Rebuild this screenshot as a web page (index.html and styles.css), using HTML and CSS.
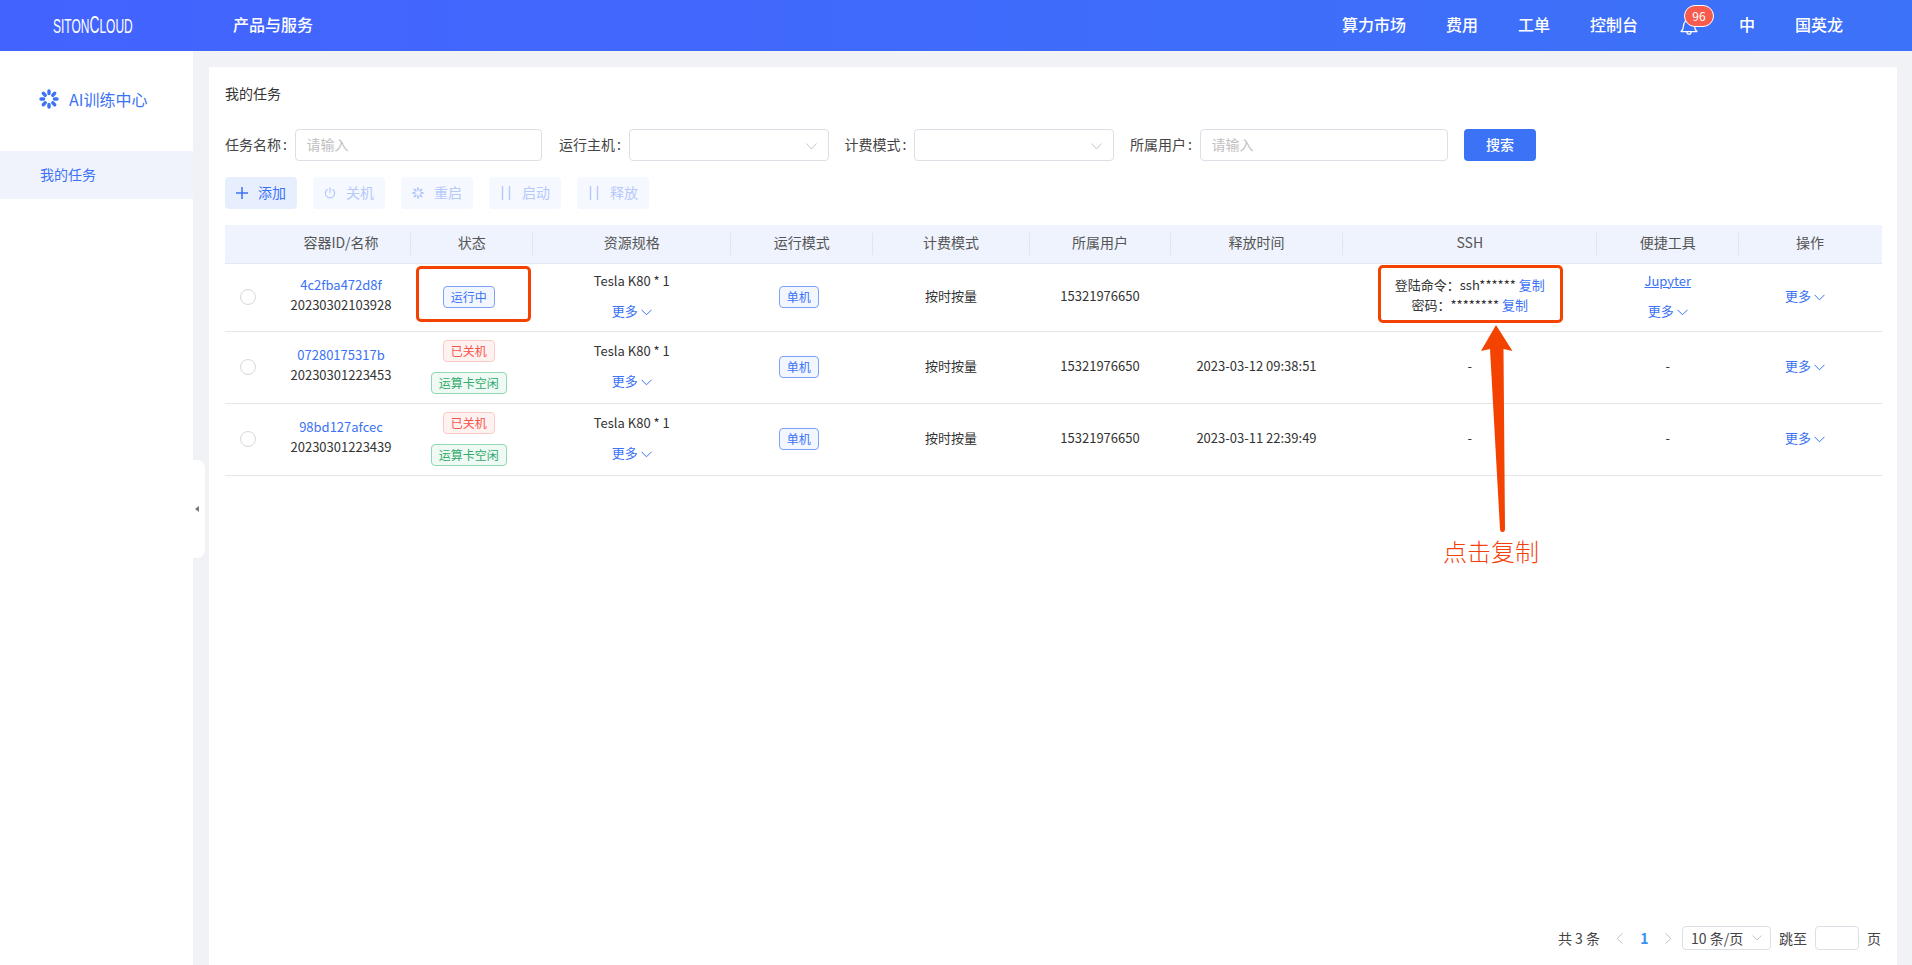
FILE: index.html
```html
<!DOCTYPE html>
<html lang="zh-CN">
<head>
<meta charset="utf-8">
<title>我的任务</title>
<link rel="stylesheet" href="styles.css">
</head>
<body>
<div class="app">
  <header class="topbar">
    <div class="logo"><span class="logo-text">SITON<span class="logo-c">C</span>LOUD</span></div>
    <div class="products">产品与服务</div>
    <nav class="topnav">
      <a>算力市场</a>
      <a>费用</a>
      <a>工单</a>
      <a>控制台</a>
      <span class="bell">
        <svg width="18" height="16" viewBox="0 0 18 16" fill="none" stroke="#fff" stroke-width="1.2" stroke-linejoin="round"><path d="M1 12.6c1.6-1.2 2.2-2.6 2.4-5C3.700 3.400 5.800 1 9 1s5.300 2.400 5.600 6.600c.2 2.400.8 3.800 2.400 5z"/><path d="M6.800 12.800c.2 1.500 1.100 2.400 2.200 2.400s2-.9 2.200-2.400"/></svg>
        <span class="badge">96</span>
      </span>
      <a>中</a>
      <a>国英龙</a>
    </nav>
  </header>
  <div class="body-row">
    <aside class="sidebar">
      <div class="side-title">
        <svg class="burst" width="20" height="20" viewBox="0 0 20 20" fill="none" stroke="#3b72f6" stroke-width="3.400" stroke-linecap="round"><path d="M10 2v2.600M10 15.400V18M2 10h2.600M15.400 10H18M4.300 4.300l1.900 1.900M13.800 13.800l1.900 1.900M4.300 15.700l1.900-1.900M13.800 6.200l1.900-1.900"/></svg>
        <span>AI训练中心</span>
      </div>
      <div class="side-item">我的任务</div>
      <div class="collapse"><i class="tri"></i></div>
    </aside>
    <main class="card">
      <div class="page-title">我的任务</div>
      <form class="search">
        <label class="lbl">任务名称<span class="colon">:</span></label>
        <input class="ctl w-wide" placeholder="请输入">
        <label class="lbl">运行主机<span class="colon">:</span></label>
        <div class="ctl sel w-sel"><svg width="11" height="7" viewBox="0 0 11 7" fill="none" stroke="#c4c7cd"><path d="M.5.5l5 5.500 5-5.500"/></svg></div>
        <label class="lbl">计费模式<span class="colon">:</span></label>
        <div class="ctl sel w-sel"><svg width="11" height="7" viewBox="0 0 11 7" fill="none" stroke="#c4c7cd"><path d="M.5.5l5 5.500 5-5.500"/></svg></div>
        <label class="lbl">所属用户<span class="colon">:</span></label>
        <input class="ctl w-wide2" placeholder="请输入">
        <button type="button" class="btn-search"><span>搜索</span></button>
      </form>
      <div class="actions">
        <button type="button" class="act act-on">
          <svg width="12" height="12" viewBox="0 0 12 12" stroke="#3b72f6" stroke-width="1.500"><path d="M0 6h12M6 0v12"/></svg><span>添加</span>
        </button>
        <button type="button" class="act">
          <svg width="12" height="12" viewBox="0 0 12 12" fill="none" stroke="#b5c9fb" stroke-width="1.200" stroke-linecap="round"><path d="M3.300 2.600a4.600 4.600 0 1 0 5.400 0M6 .8v4.600"/></svg><span>关机</span>
        </button>
        <button type="button" class="act">
          <svg width="12" height="12" viewBox="0 0 20 20" fill="none" stroke="#b5c9fb" stroke-width="3.400" stroke-linecap="round"><path d="M10 2v2.600M10 15.400V18M2 10h2.600M15.400 10H18M4.300 4.300l1.900 1.900M13.800 13.800l1.900 1.900M4.300 15.700l1.900-1.900M13.800 6.200l1.900-1.900"/></svg><span>重启</span>
        </button>
        <button type="button" class="act">
          <svg width="12" height="14" viewBox="0 0 12 14" stroke="#b5c9fb" stroke-width="1.400"><path d="M2.500 0v14M9.500 0v14"/></svg><span>启动</span>
        </button>
        <button type="button" class="act">
          <svg width="12" height="14" viewBox="0 0 12 14" stroke="#b5c9fb" stroke-width="1.400"><path d="M2.500 0v14M9.500 0v14"/></svg><span>释放</span>
        </button>
      </div>
      <table class="grid">
        <colgroup>
          <col class="c1"><col class="c2"><col class="c3"><col class="c4"><col class="c5"><col class="c6"><col class="c7"><col class="c8"><col class="c9"><col class="c10"><col class="c11">
        </colgroup>
        <thead>
          <tr>
            <th class="nosep"></th><th>容器ID/名称</th><th>状态</th><th>资源规格</th><th>运行模式</th><th>计费模式</th><th>所属用户</th><th>释放时间</th><th>SSH</th><th>便捷工具</th><th class="nosep">操作</th>
          </tr>
        </thead>
        <tbody>
          <tr class="r1">
            <td><span class="radio"></span></td>
            <td><div class="stack"><a class="lnk">4c2fba472d8f</a><span>20230302103928</span></div></td>
            <td><span class="tag t-blue">运行中</span></td>
            <td><div class="stack s10"><span>Tesla K80 * 1</span><a class="lnk more">更多<svg width="11" height="7" viewBox="0 0 11 7" fill="none" stroke="#3b72f6"><path d="M.5.8l5 5 5-5"/></svg></a></div></td>
            <td><span class="tag t-blue">单机</span></td>
            <td><div class="nudge">按时按量</div></td>
            <td><div class="nudge">15321976650</div></td>
            <td></td>
            <td><div class="stack"><span>登陆命令：ssh****** <a class="lnk">复制</a></span><span>密码：******** <a class="lnk">复制</a></span></div></td>
            <td><div class="stack s10"><a class="lnk jup">Jupyter</a><a class="lnk more">更多<svg width="11" height="7" viewBox="0 0 11 7" fill="none" stroke="#3b72f6"><path d="M.5.8l5 5 5-5"/></svg></a></div></td>
            <td><div class="nudge op"><a class="lnk more">更多<svg width="11" height="7" viewBox="0 0 11 7" fill="none" stroke="#3b72f6"><path d="M.5.8l5 5 5-5"/></svg></a></div></td>
          </tr>
          <tr class="r2">
            <td><span class="radio"></span></td>
            <td><div class="stack"><a class="lnk">07280175317b</a><span>20230301223453</span></div></td>
            <td><div class="tags"><span class="tag t-red">已关机</span><span class="tag t-green">运算卡空闲</span></div></td>
            <td><div class="stack s10"><span>Tesla K80 * 1</span><a class="lnk more">更多<svg width="11" height="7" viewBox="0 0 11 7" fill="none" stroke="#3b72f6"><path d="M.5.8l5 5 5-5"/></svg></a></div></td>
            <td><span class="tag t-blue">单机</span></td>
            <td><div class="nudge">按时按量</div></td>
            <td><div class="nudge">15321976650</div></td>
            <td><div class="nudge">2023-03-12 09:38:51</div></td>
            <td><div class="nudge">-</div></td>
            <td><div class="nudge">-</div></td>
            <td><div class="nudge op"><a class="lnk more">更多<svg width="11" height="7" viewBox="0 0 11 7" fill="none" stroke="#3b72f6"><path d="M.5.8l5 5 5-5"/></svg></a></div></td>
          </tr>
          <tr class="r2">
            <td><span class="radio"></span></td>
            <td><div class="stack"><a class="lnk">98bd127afcec</a><span>20230301223439</span></div></td>
            <td><div class="tags"><span class="tag t-red">已关机</span><span class="tag t-green">运算卡空闲</span></div></td>
            <td><div class="stack s10"><span>Tesla K80 * 1</span><a class="lnk more">更多<svg width="11" height="7" viewBox="0 0 11 7" fill="none" stroke="#3b72f6"><path d="M.5.8l5 5 5-5"/></svg></a></div></td>
            <td><span class="tag t-blue">单机</span></td>
            <td><div class="nudge">按时按量</div></td>
            <td><div class="nudge">15321976650</div></td>
            <td><div class="nudge">2023-03-11 22:39:49</div></td>
            <td><div class="nudge">-</div></td>
            <td><div class="nudge">-</div></td>
            <td><div class="nudge op"><a class="lnk more">更多<svg width="11" height="7" viewBox="0 0 11 7" fill="none" stroke="#3b72f6"><path d="M.5.8l5 5 5-5"/></svg></a></div></td>
          </tr>
        </tbody>
      </table>
      <div class="pager">
        <span class="total">共 3 条</span>
        <svg class="pg-prev" width="7" height="11" viewBox="0 0 7 11" fill="none" stroke="#c0c4cc"><path d="M6.500.5l-5.500 5 5.500 5"/></svg>
        <span class="pg-num">1</span>
        <svg class="pg-next" width="7" height="11" viewBox="0 0 7 11" fill="none" stroke="#c0c4cc"><path d="M.5.500l5.500 5-5.500 5"/></svg>
        <div class="pg-size"><span>10 条/页</span><svg width="10" height="6" viewBox="0 0 10 6" fill="none" stroke="#c4c7cd"><path d="M.5.500l4.500 4.500 4.500-4.500"/></svg></div>
        <span class="pg-jump">跳至</span>
        <input class="pg-input">
        <span class="pg-unit">页</span>
      </div>
    </main>
  </div>
  <div class="mark mark-status"></div>
  <div class="mark mark-ssh"></div>
  <svg class="arrow" width="36" height="210" viewBox="0 0 36 210"><path fill="#f44300" d="M15 0L31.500 26 22.500 24 24 204Q24 207 21.500 207 19 207 19 204L9 24 0 26z"/></svg>
  <div class="note">点击复制</div>
</div>
</body>
</html>
```
FILE: styles.css
```css
* { box-sizing: border-box; }
html, body { margin: 0; height: 100%; overflow: hidden; }
body {
  font-family: "Noto Sans CJK SC", "Noto Sans", sans-serif;
  font-size: 13px;
  color: #333;
  background: #f0f2f6;
}
.app { position: relative; height: 965px; display: flex; flex-direction: column; }

.topbar {
  height: 51px;
  flex: none;
  display: flex;
  align-items: center;
  padding: 0 69px 4px 53px;
  color: #fff;
  background: linear-gradient(90deg, #4363ff 0%, #3c72f8 100%);
}
.logo { width: 180px; height: 20px; margin-top: 4px; font-family: "Liberation Sans", sans-serif; }
.logo-text {
  display: inline-block;
  font-size: 20px;
  line-height: 20px;
  transform: scaleX(.6);
  transform-origin: left center;
  white-space: nowrap;
}
.logo-c { font-size: 23px; line-height: 16px; }
.products { font-size: 16px; font-weight: 500; }
.topnav { margin-left: auto; display: flex; align-items: center; gap: 40px; font-size: 16px; font-weight: 500; }
.bell { position: relative; display: block; width: 18px; height: 16px; margin: 7px 1px 0 2px; }
.bell svg { display: block; }
.badge {
  position: absolute;
  left: 4px;
  top: -14px;
  width: 30px;
  height: 22px;
  border: 1px solid #fff;
  border-radius: 11px;
  background: #f85a4d;
  color: #fff;
  font-size: 12px;
  font-weight: 400;
  line-height: 19px;
  text-align: center;
}

.body-row { flex: 1; display: flex; min-height: 0; }
.sidebar { position: relative; width: 193px; flex: none; background: #fff; }
.side-title {
  height: 100px;
  display: flex;
  align-items: center;
  gap: 10px;
  padding: 0 0 4px 39px;
  color: #3b72f6;
  font-size: 16px;
  line-height: 20px;
}
.side-item {
  height: 48px;
  padding-left: 40px;
  line-height: 46px;
  font-size: 14px;
  color: #3b72f6;
  background: #f0f3fc;
}
.collapse {
  position: absolute;
  left: 193px;
  top: 409px;
  width: 12px;
  height: 98px;
  display: flex;
  align-items: center;
  padding-left: 2px;
  background: #fff;
  border-radius: 0 8px 8px 0;
}
.tri { width: 0; height: 0; border-style: solid; border-width: 3.500px 4px 3.500px 0; border-color: transparent #777 transparent transparent; }

.card {
  flex: 1;
  min-width: 0;
  display: flex;
  flex-direction: column;
  margin: 16px 15px 0 16px;
  padding: 16px 16px 15px;
  background: #fff;
}
.page-title { font-size: 14px; line-height: 20px; }
.search { display: flex; align-items: center; margin-top: 26px; height: 32px; }
.lbl { width: 69.500px; padding-bottom: 2px; font-size: 14px; color: #444; flex: none; white-space: nowrap; }
.colon { margin-left: 2px; }
.ctl {
  height: 32px;
  flex: none;
  border: 1px solid #dcdfe6;
  border-radius: 4px;
  background: #fff;
  font: inherit;
  font-size: 14px;
  padding: 0 11px 2px;
  outline: none;
}
.ctl::placeholder { color: #bfbfbf; }
.w-wide { width: 247.500px; margin-right: 17px; }
.w-sel { width: 200px; margin-right: 16px; }
.w-wide2 { width: 248px; margin-right: 16.500px; }
.sel { display: flex; align-items: center; justify-content: flex-end; padding: 2px 11px 0 0; }
.btn-search {
  width: 72px;
  height: 32px;
  padding: 0 0 2px;
  border: 0;
  border-radius: 4px;
  background: #3b72f6;
  color: #fff;
  font: inherit;
  font-size: 14px;
  font-weight: 500;
}
.actions { display: flex; gap: 16px; margin-top: 16px; }
.act {
  width: 72px;
  height: 32px;
  display: flex;
  align-items: center;
  gap: 10px;
  padding: 0 0 0 11px;
  border: 0;
  border-radius: 4px;
  background: #f5f8ff;
  color: #b5c9fb;
  font: inherit;
  font-size: 14px;
}
.act svg { flex: none; }
.act span { margin-bottom: 2px; }
.act-on { background: #e7eefe; color: #3b72f6; }

.grid { width: 1656px; margin-top: 16px; border-collapse: collapse; table-layout: fixed; }
.c1 { width: 46px; } .c2 { width: 140px; } .c3 { width: 121.500px; } .c4 { width: 198.500px; }
.c5 { width: 141.500px; } .c6 { width: 157px; } .c7 { width: 141px; } .c8 { width: 172px; }
.c9 { width: 254.500px; } .c10 { width: 141.500px; } .c11 { width: 143px; }
.grid th {
  position: relative;
  height: 38px;
  padding: 0 0 3px;
  background: #eef3fe;
  border-bottom: 1px solid #e3e7f0;
  font-size: 14px;
  font-weight: 400;
  color: #555;
  text-align: center;
}
.grid th::after {
  content: "";
  position: absolute;
  right: 0;
  top: 8px;
  width: 1px;
  height: 22px;
  background: #dfe5f2;
}
.grid th.nosep::after { display: none; }
.grid td {
  padding: 0;
  border-bottom: 1px solid #e6e6e6;
  text-align: center;
  vertical-align: middle;
  line-height: 20px;
  color: #333;
}
.r1 td { height: 68px; }
.r2 td { height: 72px; }
.radio { display: block; width: 16px; height: 16px; margin: 0 0 1px 15px; border: 1px solid #d9d9d9; border-radius: 50%; background: #fff; }
.stack { display: flex; flex-direction: column; align-items: center; padding-bottom: 4px; }
.s10 { gap: 10px; padding-bottom: 3px; }
.nudge { padding-bottom: 3px; }
.op { padding-right: 10px; }
.lnk { color: #3b72f6; }
.more { display: inline-flex; align-items: center; gap: 3px; }
.more svg { margin-top: 3px; }
.jup { text-decoration: underline; }
.tags { display: flex; flex-direction: column; align-items: center; gap: 10px; padding-right: 6px; }
.tag {
  display: inline-block;
  height: 22px;
  padding: 0 7px;
  border: 1px solid;
  border-radius: 4px;
  font-size: 12px;
  line-height: 19px;
  vertical-align: middle;
}
td > .t-blue { margin-right: 6px; }
.t-blue { color: #3b72f6; border-color: #7fa1f6; background: #f2f6ff; }
.t-red { color: #f5544a; border-color: #fbcac6; background: #fef2f1; }
.t-green { color: #2eaa6a; border-color: #8fd8b2; background: #effaf4; }

.pager { margin-top: auto; display: flex; align-items: center; height: 24px; font-size: 14px; color: #444; }
.total { margin-left: auto; margin-right: 16px; }
.pg-num { width: 19px; margin: 0 11px 0 12px; font-weight: 700; color: #3b8ff6; text-align: center; }
.pg-size {
  width: 89px;
  height: 24px;
  margin-left: 10px;
  padding: 0 8px;
  display: flex;
  align-items: center;
  justify-content: space-between;
  border: 1px solid #dcdfe6;
  border-radius: 4px;
}
.pg-jump { margin-left: 8px; }
.pg-input { width: 44px; height: 24px; margin: 0 8px 0 8px; border: 1px solid #dcdfe6; border-radius: 4px; outline: none; }

.mark { position: absolute; border: 3px solid #f44300; border-radius: 5px; }
.mark-status { left: 416px; top: 266px; width: 115px; height: 56px; }
.mark-ssh { left: 1378px; top: 265px; width: 185px; height: 58px; }
.arrow { position: absolute; left: 1481px; top: 325px; }
.note { position: absolute; left: 1443px; top: 533px; font-size: 24px; font-weight: 300; line-height: 36px; color: #f4410c; }
```
